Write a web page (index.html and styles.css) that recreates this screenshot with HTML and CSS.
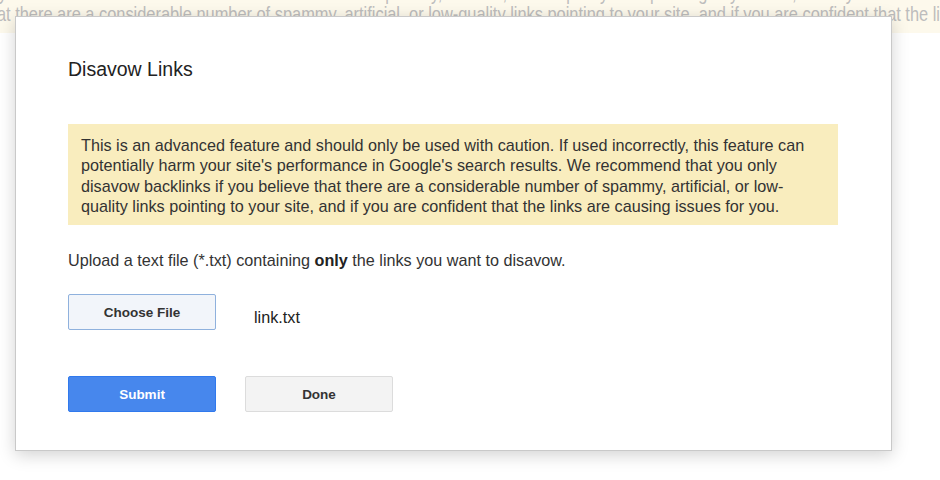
FILE: index.html
```html
<!DOCTYPE html>
<html>
<head>
<meta charset="utf-8">
<link rel="stylesheet" href="styles.css">
</head>
<body>
<div class="page">
  <div class="band">
    <div class="band-line band-line-top">disavow backlinks if you believe that there are a considerable number of spammy, artificial, or low-quality links pointing to your site, and if you are confident that the links</div>
    <div class="band-line">at there are a considerable number of spammy, artificial, or low-quality links pointing to your site, and if you are confident that the links are causing issues for you.</div>
  </div>
</div>
<div class="dialog">
  <h1 class="title">Disavow Links</h1>
  <div class="warning">This is an advanced feature and should only be used with caution. If used incorrectly, this feature can potentially harm your site's performance in Google's search results. We recommend that you only disavow backlinks if you believe that there are a considerable number of spammy, artificial, or low-quality links pointing to your site, and if you are confident that the links are causing issues for you.</div>
  <p class="upload">Upload a text file (*.txt) containing <b>only</b> the links you want to disavow.</p>
  <div class="file-row">
    <button class="btn btn-file">Choose File</button>
    <span class="file-name">link.txt</span>
  </div>
  <div class="actions">
    <button class="btn btn-primary">Submit</button>
    <button class="btn btn-default">Done</button>
  </div>
</div>
</body>
</html>
```
FILE: styles.css
```css
html, body {
  margin: 0;
  padding: 0;
  background: #ffffff;
  width: 940px;
  height: 480px;
  overflow: hidden;
  font-family: Arial, "Liberation Sans", sans-serif;
}
.page {
  width: 940px;
}
.band {
  height: 33px;
  background: #fdf9ec;
  overflow: hidden;
}
.band-line {
  white-space: nowrap;
  color: #bdbdbd;
  font-size: 21px;
  line-height: 21px;
  transform: scaleX(0.78);
  transform-origin: 0 0;
  margin-left: -3px;
}
.band-line-top {
  margin-top: -18px;
  margin-left: -150px;
}
.dialog {
  position: absolute;
  left: 15px;
  top: 16px;
  width: 823px;
  height: 433px;
  padding: 0 0 0 52px;
  background: #ffffff;
  border: 1px solid #c9c9c9;
  box-shadow: 0 4px 16px rgba(0, 0, 0, 0.18);
  color: #222222;
}
.title {
  margin: 41px 0 0 0;
  font-size: 19.5px;
  font-weight: normal;
  line-height: 22px;
  color: #222222;
}
.warning {
  margin-top: 44px;
  width: 744px;
  padding: 11px 13px 9px 13px;
  background: #f9edbe;
  font-size: 16.2px;
  line-height: 20.3px;
  color: #333333;
}
.upload {
  margin: 25px 0 0 0;
  font-size: 16.2px;
  line-height: 20px;
  color: #333333;
}
.upload b {
  color: #222222;
}
.file-row {
  display: flex;
  align-items: center;
  margin-top: 24px;
}
.btn {
  width: 148px;
  height: 36px;
  box-sizing: border-box;
  font-family: Arial, "Liberation Sans", sans-serif;
  font-size: 13.5px;
  font-weight: bold;
  border-radius: 2px;
  padding: 0;
  color: #333333;
}
.btn-file {
  background: #f2f5fa;
  border: 1px solid #8fb1dd;
}
.file-name {
  margin-left: 38px;
  margin-top: 10px;
  font-size: 16.2px;
  color: #222222;
}
.actions {
  display: flex;
  gap: 29px;
  margin-top: 46px;
}
.btn-primary {
  background: #4787ed;
  border: 1px solid #3079ed;
  color: #ffffff;
}
.btn-default {
  background: #f3f3f3;
  border: 1px solid #dcdcdc;
  color: #333333;
}
```
